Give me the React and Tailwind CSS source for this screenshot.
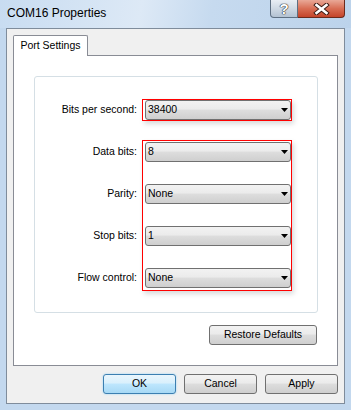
import React from 'react'

const btnBg = 'bg-[linear-gradient(#f2f2f2,#ebebeb_45%,#dddddd_50%,#cfcfcf)]'

const Arrow = () => (
  <svg width="7" height="4" viewBox="0 0 7 4">
    <polygon points="0,0 7,0 3.5,4" fill="#000" />
  </svg>
)

const Combo = ({ value }) => (
  <div className={`h-[20px] flex items-center justify-between rounded-[3px] border border-[#707070] ${btnBg} pl-[2px] pr-[2px]`}>
    <span>{value}</span>
    <Arrow />
  </div>
)

const Button = ({ children, className = '' }) => (
  <div className={`h-[20px] flex items-center justify-center rounded-[3px] border border-[#707070] ${btnBg} ${className}`}>
    {children}
  </div>
)

const App = () => {
  return (
    <main className="w-[351px] h-[410px] flex flex-col bg-[#c3d8ee] font-['Liberation_Sans',Arial,sans-serif] text-black overflow-hidden">
      {/* title bar */}
      <div className="h-[28px] flex items-start bg-[linear-gradient(100deg,#c8dcf1,#dde9f6_40%,#c6daef_60%,#bcd3eb)]">
        <span className="ml-[7px] mt-[6px] text-[12px] leading-[14px]">COM16 Properties</span>
        <div className="flex-1" />
        <div className="flex mr-[6px]">
          <div className="w-[28px] h-[18px] flex items-center justify-center rounded-bl-[4px] border border-t-0 border-[#5e6f82] bg-[linear-gradient(#e9eef4,#cfd9e4_50%,#b3c2d2)]">
            <span className="text-white font-bold text-[15px] leading-none [text-shadow:0_0_1px_#222,0_0_1px_#222,0_0_1px_#222]">?</span>
          </div>
          <div className="w-[47px] h-[18px] flex items-center justify-center rounded-br-[4px] border border-t-0 border-l-0 border-[#6b2a1c] bg-[linear-gradient(#e9a897,#d86e55_50%,#c4442a)]">
            <svg width="17" height="12" viewBox="0 0 17 12">
              <path d="M3.5 2 L13.5 10 M13.5 2 L3.5 10" stroke="#3a1a14" strokeWidth="4.5" strokeLinecap="square" />
              <path d="M3.5 2 L13.5 10 M13.5 2 L3.5 10" stroke="#fff" strokeWidth="2.6" strokeLinecap="square" />
            </svg>
          </div>
        </div>
      </div>

      {/* window body */}
      <div className="ml-[6px] w-[339px] h-[376px] border border-[#7f8c9b] bg-[#f0f0f0] flex flex-col text-[10.5px]">
        <div className="pl-[6px] pt-[6px] flex flex-col">
          {/* tab */}
          <div className="relative z-10 -mb-px w-[75px] h-[21px] flex items-center justify-center bg-white border border-b-0 border-[#898c95] rounded-t-[2px]">
            Port Settings
          </div>
          {/* tab page */}
          <div className="w-[325px] h-[311px] border border-[#898c95] bg-white flex flex-col">
            <div className="ml-[20px] mt-[20px] w-[284px] h-[237px] border border-[#d5dfe5] rounded-[3px] flex flex-col pt-[22px]">
              <div className="flex items-start">
                <div className="w-[102px] h-[22px] flex items-center justify-end">Bits per second:</div>
                <div className="ml-[5px] w-[150px] h-[22px] border border-[#ff0000] pl-[2px] shadow-[2px_3px_5px_rgba(0,0,0,0.15)]">
                  <Combo value="38400" />
                </div>
              </div>
              <div className="flex items-start mt-[19px]">
                <div className="w-[102px] pt-[2px] flex flex-col gap-[22px]">
                  {['Data bits:', 'Parity:', 'Stop bits:', 'Flow control:'].map((l) => (
                    <div key={l} className="h-[20px] flex items-center justify-end">{l}</div>
                  ))}
                </div>
                <div className="ml-[5px] w-[150px] border border-[#ff0000] pl-[2px] pt-[1px] pb-[2px] flex flex-col gap-[22px] shadow-[2px_3px_5px_rgba(0,0,0,0.15)]">
                  <Combo value="8" />
                  <Combo value="None" />
                  <Combo value="1" />
                  <Combo value="None" />
                </div>
              </div>
            </div>
            <div className="mt-[12px] mr-[20px] self-end">
              <Button className="w-[108px]">Restore Defaults</Button>
            </div>
          </div>
        </div>
        <div className="mt-[8px] pr-[6px] flex justify-end gap-[8px]">
          <div className="w-[73px] h-[20px] flex items-center justify-center rounded-[3px] border border-[#3c7fb1] bg-[linear-gradient(#eaf6fd,#d9f0fc_45%,#bee6fd_50%,#a7d9f5)] shadow-[0_0_2px_#8fd1f5]">
            OK
          </div>
          <Button className="w-[73px]">Cancel</Button>
          <Button className="w-[73px]">Apply</Button>
        </div>
      </div>
    </main>
  )
}

export default App
